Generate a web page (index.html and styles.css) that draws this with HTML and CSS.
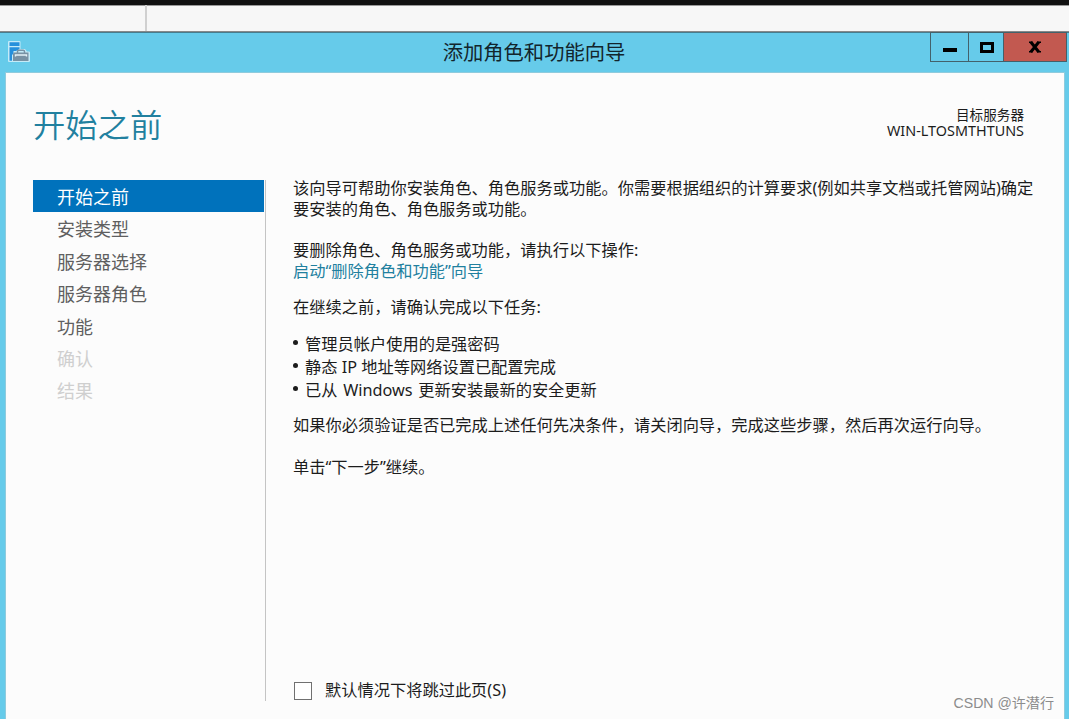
FILE: index.html
```html
<!DOCTYPE html>
<html lang="zh-CN">
<head>
    <meta charset="UTF-8">
    <meta name="viewport" content="width=device-width, initial-scale=1.0">
    <title>添加角色和功能向导</title>
    <link rel="stylesheet" href="styles.css">
</head>
<body>
    <div class="backdrop">
        <div class="backdrop-left"></div>
    </div>

    <div class="window">
        <div class="titlebar">
            <svg class="app-icon" width="24" height="24" viewBox="0 0 24 24">
                <path d="M1 2q0-1 1-1h10.500q1 0 1 1v7h4.500l2 2.500h2q1 0 1 1V21q0 1-1 1H2q-1 0-1-1z" fill="#c4ebf8"/>
                <path d="M2.500 2.300h10v3.700h-10zM2.500 7.300h10V9L9 11H6.500v2.500L5 15v5.700H2.500z" fill="#2590dc"/>
                <path d="M10.500 13v-1.500q0-1.300 1.300-1.300h4.400q1.300 0 1.300 1.300V13" fill="none" stroke="#7892a4" stroke-width="1.400"/>
                <path d="M7 12.500h14.500V21H6v-7.500z" fill="#7892a4"/>
                <path d="M8.500 16.500V15h11v1.500" fill="none" stroke="#e4f2f8" stroke-width="1.400"/>
            </svg>
            <h1>添加角色和功能向导</h1>
            <div class="controls">
                <button class="minimize" aria-label="最小化"><span></span></button>
                <button class="maximize" aria-label="最大化"><span></span></button>
                <button class="close" aria-label="关闭">
                    <svg width="14" height="12" viewBox="0 0 14 12">
                        <path d="M2.800 1l8 10M10.800 1l-8 10" stroke="#000" stroke-width="3"/>
                        <path d="M1 1.200h3.500M9.500 1.200H13M1 10.800h3.500M9.500 10.800H13" stroke="#000" stroke-width="1.600"/>
                    </svg>
                </button>
            </div>
        </div>

        <div class="wizard">
            <div class="header">
                <h2>开始之前</h2>
                <div class="server">
                    <div class="server-label">目标服务器</div>
                    <div class="server-name">WIN-LTOSMTHTUNS</div>
                </div>
            </div>

            <div class="main">
                <ul class="steps">
                    <li class="active">开始之前</li>
                    <li>安装类型</li>
                    <li>服务器选择</li>
                    <li>服务器角色</li>
                    <li>功能</li>
                    <li class="disabled">确认</li>
                    <li class="disabled">结果</li>
                </ul>

                <div class="content">
                    <p class="intro">该向导可帮助你安装角色、角色服务或功能。你需要根据组织的计算要求(例如共享文档或托管网站)确定<br>要安装的角色、角色服务或功能。</p>
                    <p class="remove">要删除角色、角色服务或功能，请执行以下操作:<br><a href="#">启动“删除角色和功能”向导</a></p>
                    <p class="before">在继续之前，请确认完成以下任务:</p>
                    <ul class="tasks">
                        <li>管理员帐户使用的是强密码</li>
                        <li>静态 IP 地址等网络设置已配置完成</li>
                        <li class="updates">已从 Windows 更新安装最新的安全更新</li>
                    </ul>
                    <p class="verify">如果你必须验证是否已完成上述任何先决条件，请关闭向导，完成这些步骤，然后再次运行向导。</p>
                    <p>单击“下一步”继续。</p>
                    <label class="skip">
                        <input type="checkbox">
                        <span>默认情况下将跳过此页(S)</span>
                    </label>
                </div>
            </div>
        </div>
    </div>

    <div class="watermark">CSDN @许潜行</div>
</body>
</html>
```

FILE: styles.css
```css
* {
    box-sizing: border-box;
}

body {
    margin: 0;
    height: 719px;
    overflow: hidden;
    display: flex;
    flex-direction: column;
    font-family: "Noto Sans", "Noto Sans CJK SC", sans-serif;
    font-size: 16.24px;
    color: #1c1c1c;
    background-color: #66cbea;
}

h1, h2, p, ul {
    margin: 0;
    padding: 0;
    font-weight: normal;
}

ul {
    list-style: none;
}

.backdrop {
    flex: none;
    height: 32px;
    border-top: 5px solid #111;
    border-bottom: 1px solid #888;
    background-color: #f7f7f7;
    box-shadow: inset 0 1px 0 #999;
}

.backdrop-left {
    width: 147px;
    height: 100%;
    border-right: 2px solid #d0d0d0;
}

.window {
    flex: 1;
    min-height: 0;
    display: flex;
    flex-direction: column;
    padding: 0 5px 0 6px;
    border-top: 1px solid #477c8d;
}

/* title bar */
.titlebar {
    flex: none;
    height: 40px;
    display: grid;
    grid-template-columns: 200px 1fr 200px;
    margin: 0 -3px 0 -6px;
}

.app-icon {
    margin: 7px 0 0 7px;
}

.titlebar h1 {
    padding-left: 1px;
    font-size: 20.3px;
    line-height: 39px;
    text-align: center;
    color: #12252c;
}

.controls {
    display: flex;
    justify-self: end;
    height: 30px;
    margin-top: -1px;
    border: 1px solid #43616b;
}

.controls button {
    display: flex;
    align-items: center;
    justify-content: center;
    padding: 0;
    border: none;
    border-right: 1px solid #43616b;
    background-color: #66cbea;
}

.controls .minimize {
    width: 38px;
}

.minimize span {
    width: 14px;
    height: 4px;
    margin-top: 6px;
    background-color: #000;
}

.controls .maximize {
    width: 35px;
    padding-left: 1px;
}

.maximize span {
    width: 14px;
    height: 11px;
    border: 3px solid #000;
}

.controls .close {
    width: 62px;
    border-right: none;
    background-color: #c25950;
}

/* wizard page */
.wizard {
    flex: 1;
    min-height: 0;
    background-color: #fcfcfc;
    box-shadow: 0 0 0 1px #8fcbdd;
}

.header {
    display: flex;
    justify-content: space-between;
    height: 107px;
    padding: 0 40px 0 27px;
}

.header h2 {
    padding-top: 27px;
    font-size: 32.3px;
    font-weight: 350;
    line-height: 48px;
    color: #21809f;
}

.server {
    padding-top: 33px;
    text-align: right;
    line-height: 17px;
}

.server-label {
    font-size: 13.6px;
}

.server-name {
    font-size: 14.4px;
    line-height: 16px;
}

.main {
    display: flex;
    height: 521px;
    padding-left: 27px;
}

.steps {
    width: 233px;
    padding-right: 1px;
    border-right: 1px solid #c4c4c4;
}

.steps li {
    height: 32.4px;
    padding-left: 24px;
    font-size: 18px;
    line-height: 35px;
    color: #5f5f5f;
}

.steps .active {
    background-color: #0072bc;
    color: #fff;
}

.steps .disabled {
    color: #cfcfcf;
}

.content {
    flex: 1;
    display: flex;
    flex-direction: column;
    margin-top: -2px;
    padding-left: 27px;
    line-height: 20.6px;
    white-space: nowrap;
}

.content .intro,
.content .verify {
    margin-bottom: 21px;
}

.content .remove {
    margin-bottom: 16px;
}

.content a {
    color: #21809f;
    text-decoration: none;
}

.tasks {
    margin: 15px 0 13px;
}

.tasks li {
    display: flex;
    align-items: center;
    gap: 7px;
    line-height: 23px;
}

.tasks li::before {
    content: "";
    width: 5px;
    height: 5px;
    margin-top: -4px;
    border-radius: 50%;
    background-color: #1c1c1c;
}

.tasks .updates {
    word-spacing: 1.5px;
}

.skip {
    display: flex;
    align-items: center;
    gap: 13px;
    margin-top: auto;
}

.skip input {
    appearance: none;
    width: 18px;
    height: 18px;
    margin: 0 0 0 1px;
    border: 1px solid #707070;
    background-color: #fff;
}

.watermark {
    position: absolute;
    right: 15px;
    bottom: 6px;
    font-family: "Liberation Sans", "Noto Sans CJK SC", sans-serif;
    font-size: 14.1px;
    line-height: 20px;
    color: #8c8c8c;
}
```
